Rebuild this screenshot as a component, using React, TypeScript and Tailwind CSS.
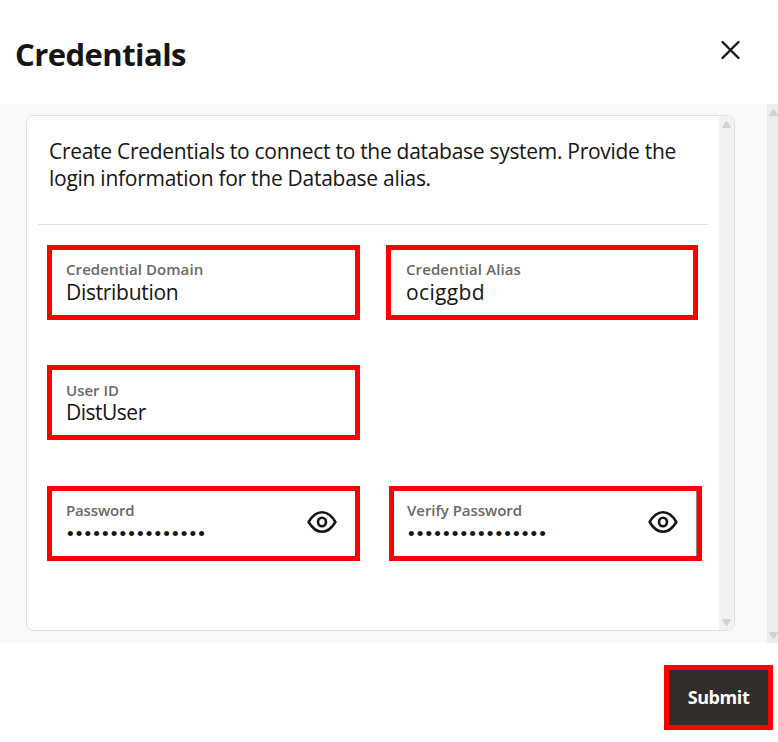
import React from "react";

const DOTS = "••••••••••••••••";

function EyeIcon() {
  return (
    <svg width="30" height="24" viewBox="0 0 30 24" fill="none" stroke="#161513" strokeWidth="2.6" className="block shrink-0">
      <path d="M1.600 12C5.400 5.600 9.800 2.300 15 2.300S24.600 5.600 28.400 12C24.600 18.400 20.200 21.700 15 21.700S5.400 18.400 1.600 12Z" strokeLinejoin="round" />
      <ellipse cx="15" cy="12" rx="4" ry="4.300" />
    </svg>
  );
}

function Triangle({ down = false }: { down?: boolean }) {
  return (
    <svg width="9" height="7" viewBox="0 0 9 7" className={down ? "block shrink-0 rotate-180" : "block shrink-0"}>
      <path d="M4.500 1 8 6H1Z" fill="#d2d2d2" stroke="#d2d2d2" strokeWidth="1.800" strokeLinejoin="round" />
    </svg>
  );
}

type FieldProps = {
  className: string;
  label: string;
  labelClass: string;
  value?: string;
  valueClass?: string;
  secret?: boolean;
};

function Field({ className, label, labelClass, value, valueClass = "", secret = false }: FieldProps) {
  return (
    <div className={"flex h-[75px] border-[5px] border-[#ff0000] bg-white " + className}>
      <div className="min-w-0 flex-1 whitespace-nowrap">
        <div className={"text-[15px] leading-5 font-semibold text-[#6b6865] " + labelClass}>{label}</div>
        {secret ? (
          <div className="h-6 pl-px font-['Liberation_Sans',sans-serif] text-[19px] leading-[25px] tracking-[2.100px] text-[#161513]">{DOTS}</div>
        ) : (
          <div className={"h-6 text-[21px] leading-6 text-[#161513] " + valueClass}>{value}</div>
        )}
      </div>
      {secret && (
        <button type="button" aria-label={"Show " + label} className="mt-[10px] h-6">
          <EyeIcon />
        </button>
      )}
    </div>
  );
}

export default function App() {
  return (
    <div className="flex h-[742px] w-[778px] flex-col overflow-hidden bg-white font-['Open_Sans','Noto_Sans',sans-serif] text-[#161513]">
      <header className="flex h-[104px] shrink-0 items-start justify-between pl-[15px] pr-[37px]">
        <h1 className="mt-[34px] text-[31px] leading-10 font-bold tracking-[-0.550px]">Credentials</h1>
        <button type="button" aria-label="Close" className="mt-10">
          <svg width="21" height="20" viewBox="0 0 21 20" className="block" stroke="#161513" strokeWidth="2.400" strokeLinecap="round">
            <path d="M2.500 2 18.500 18M18.500 2 2.500 18" />
          </svg>
        </button>
      </header>
      <main className="flex h-[539px] shrink-0 justify-between bg-[#faf9f7] pl-[26px]">
        <section className="mt-[11px] flex h-[516px] w-[709px] overflow-hidden rounded-[8px] border border-[#dfdfde] bg-white">
          <div className="w-[692px]">
            <div className="ml-[11px] h-[109px] w-[670px] border-b border-[#dfdfde] pt-[22px] pl-[11px] text-[21px] leading-[27px] whitespace-nowrap">
              <p className="tracking-[-0.290px]">Create Credentials to connect to the database system. Provide the</p>
              <p className="tracking-[-0.270px]">login information for the Database alias.</p>
            </div>
            <div className="mt-5 ml-5 flex">
              <Field className="w-[313px] pt-[9px] pl-[14px]" label="Credential Domain" labelClass="h-[21px] tracking-[0.080px]" value="Distribution" valueClass="tracking-[-0.300px]" />
              <Field className="ml-[26px] w-[312px] pt-[9px] pl-[15px]" label="Credential Alias" labelClass="h-[21px] tracking-[0.100px]" value="ociggbd" valueClass="tracking-[0.350px]" />
            </div>
            <div className="mt-[45px] ml-5 flex">
              <Field className="w-[313px] pt-[10px] pl-[14px]" label="User ID" labelClass="h-5 tracking-[0px]" value="DistUser" valueClass="tracking-[-0.500px]" />
            </div>
            <div className="mt-[46px] ml-5 flex">
              <Field className="w-[313px] pt-[9px] pl-[14px] pr-[18px]" label="Password" labelClass="h-[21px] tracking-[-0.150px]" secret />
              <Field className="ml-[29px] w-[313px] bg-[linear-gradient(to_left,#8b8987_1px,transparent_1px)] pt-[9px] pl-[13px] pr-[19.5px]" label="Verify Password" labelClass="h-[21px] tracking-[-0.050px]" secret />
            </div>
          </div>
          <div className="flex flex-1 flex-col items-center justify-between bg-[#f2f2f2] pt-[5px] pb-[4px]">
            <Triangle />
            <Triangle down />
          </div>
        </section>
        <div className="flex w-[11px] flex-col items-end justify-between bg-[#eeedeb] pt-[5px] pb-1">
          <Triangle />
          <Triangle down />
        </div>
      </main>
      <footer className="flex justify-end pt-[22px] pr-[5px]">
        <button type="button" className="h-[65px] w-[109px] border-[5px] border-[#ff0000] bg-[#312d2a] text-[18px] leading-[55px] font-bold tracking-[-0.400px] text-white">Submit</button>
      </footer>
    </div>
  );
}
